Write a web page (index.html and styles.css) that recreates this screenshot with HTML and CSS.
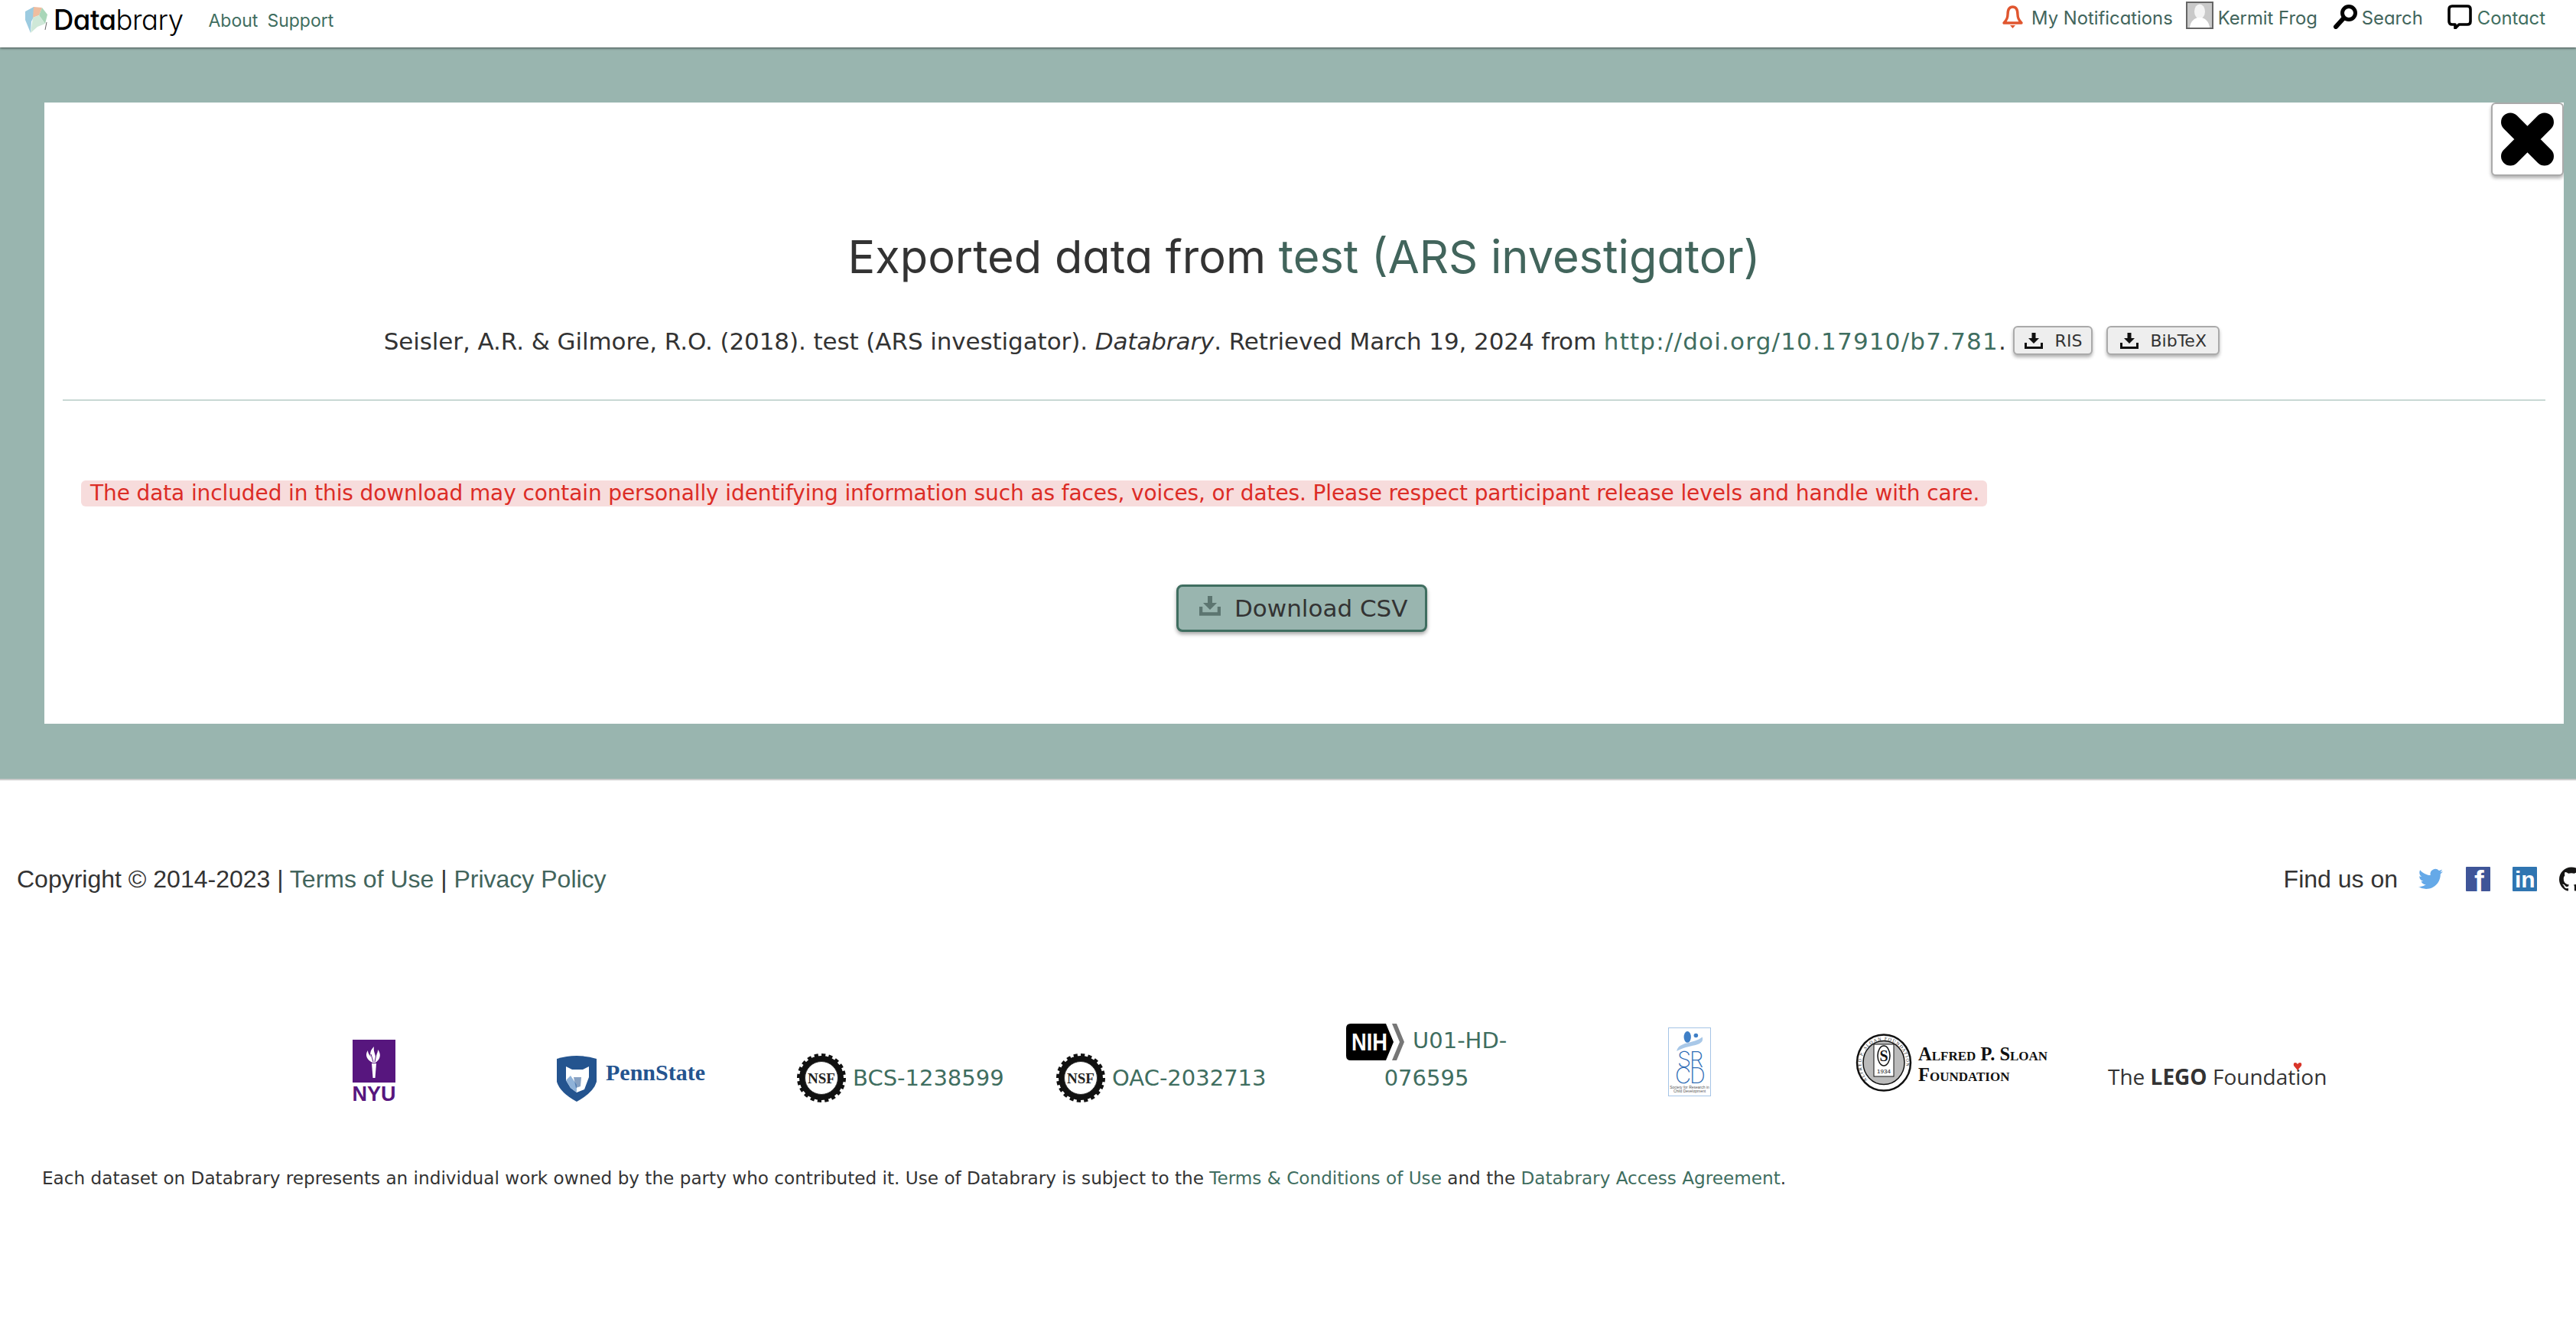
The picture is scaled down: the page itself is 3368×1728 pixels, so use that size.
FILE: index.html
```html
<!DOCTYPE html>
<html lang="en">
<head>
    <meta charset="UTF-8">
    <title>Databrary</title>
    <link rel="stylesheet" href="styles.css">
</head>
<body>

    <nav class="topbar">
        <div class="topbar-left">
            <a class="brand" href="#">
                <svg class="brand-leaf" viewBox="0 0 32 36">
                    <path d="M2 7 L13 1 L18 6 L10 20 L9 35 L2 18 Z" fill="#9ccbe0"/>
                    <path d="M13 1 L24 2 L20 12 L12 15 Z" fill="#efbd9f"/>
                    <path d="M24 2 L31 11 L28 23 L20 12 Z" fill="#a9d6b8"/>
                    <path d="M12 15 L20 12 L28 23 L18 27 L9 35 Z" fill="#cfe8d8"/>
                    <path d="M30 21 L28 31" stroke="#666" stroke-width="1" fill="none"/>
                </svg>
                <span class="brand-name"><b>Data</b>brary</span>
            </a>
            <a class="nav-link about" href="#">About</a>
            <a class="nav-link" href="#">Support</a>
        </div>
        <div class="topbar-right">
            <a class="nav-item notif" href="#">
                <svg class="nav-icon" viewBox="0 0 29 32">
                    <path d="M14.5 3 C9 3 8 8 8 13 C8 18 6 21 3 24 L26 24 C23 21 21 18 21 13 C21 8 20 3 14.5 3 Z" fill="none" stroke="#e0562f" stroke-width="3.4" stroke-linejoin="round"/>
                    <path d="M11 27 L18 27 L14.5 31 Z" fill="#e0562f"/>
                </svg>
                My Notifications
            </a>
            <a class="nav-item user" href="#">
                <svg class="avatar" viewBox="0 0 36 36">
                    <rect x="1" y="1" width="34" height="34" fill="#c9c9c9" stroke="#666" stroke-width="2"/>
                    <ellipse cx="18" cy="13" rx="7" ry="9.5" fill="#f4f4f4"/>
                    <path d="M5 34 C6 25 11 23 15 21 L21 21 C25 23 30 25 31 34 Z" fill="#fff"/>
                </svg>
                Kermit Frog
            </a>
            <a class="nav-item search" href="#">
                <svg class="nav-icon" viewBox="0 0 33 32">
                    <circle cx="21" cy="11" r="8.5" fill="none" stroke="#000" stroke-width="5"/>
                    <path d="M14 18 L4 29" stroke="#000" stroke-width="6" stroke-linecap="round"/>
                </svg>
                Search
            </a>
            <a class="nav-item contact" href="#">
                <svg class="nav-icon" viewBox="0 0 32 32">
                    <path d="M6 2 H26 Q30 2 30 6 V22 Q30 26 26 26 H15 L10 31 V26 H6 Q2 26 2 22 V6 Q2 2 6 2 Z" fill="none" stroke="#000" stroke-width="3.6" stroke-linejoin="round"/>
                </svg>
                Contact
            </a>
        </div>
    </nav>

    <main class="band">
        <section class="panel">
            <button class="close-btn">
                <svg viewBox="0 0 70 70">
                    <path d="M13 13 L57 57 M57 13 L13 57" stroke="#000" stroke-width="24" stroke-linecap="round"/>
                </svg>
            </button>

            <h1>Exported data from <a href="#">test (ARS investigator)</a></h1>

            <p class="citation">
                Seisler, A.R. &amp; Gilmore, R.O. (2018). test (ARS investigator). <em>Databrary</em>. Retrieved March 19, 2024 from <a href="#">http://doi.org/10.17910/b7.781</a>.
                <button class="cite-btn ris">
                    <svg class="dl-icon" viewBox="0 0 24 24"><path d="M9.5 2 H14.5 V9 H19 L12 16 L5 9 H9.5 Z" fill="#111"/><path d="M1.5 15 V21.500 H22.500 V15" fill="none" stroke="#111" stroke-width="3"/></svg>
                    RIS
                </button>
                <button class="cite-btn bibtex">
                    <svg class="dl-icon" viewBox="0 0 24 24"><path d="M9.5 2 H14.5 V9 H19 L12 16 L5 9 H9.5 Z" fill="#111"/><path d="M1.5 15 V21.500 H22.500 V15" fill="none" stroke="#111" stroke-width="3"/></svg>
                    BibTeX
                </button>
            </p>

            <hr class="rule">

            <p class="warning-row"><span class="warning">The data included in this download may contain personally identifying information such as faces, voices, or dates. Please respect participant release levels and handle with care.</span></p>

            <div class="download-row">
                <button class="download-btn">
                    <svg class="dl-big" viewBox="0 0 28 26"><path d="M11 0 H17 V9 H23 L14 18 L5 9 H11 Z" fill="#5c7570"/><path d="M2 14 V23.500 H26 V14" fill="none" stroke="#5c7570" stroke-width="4.500"/></svg>
                    <span>Download CSV</span>
                </button>
            </div>
        </section>
    </main>

    <footer class="footer">
        <div class="legal-row">
            <div class="copyright">Copyright © 2014-2023 | <a href="#">Terms of Use</a> | <a href="#">Privacy Policy</a></div>
            <div class="social">
                <span class="find-us">Find us on</span>
                <svg class="social-icon twitter" viewBox="0 0 24 24"><path fill="#65a9e8" d="M23.953 4.57a10 10 0 01-2.825.775 4.958 4.958 0 002.163-2.723c-.951.555-2.005.959-3.127 1.184a4.92 4.92 0 00-8.384 4.482C7.69 8.095 4.067 6.13 1.64 3.162a4.822 4.822 0 00-.666 2.475c0 1.71.87 3.213 2.188 4.096a4.904 4.904 0 01-2.228-.616v.06a4.923 4.923 0 003.946 4.827 4.996 4.996 0 01-2.212.085 4.936 4.936 0 004.604 3.417 9.867 9.867 0 01-6.102 2.105c-.39 0-.779-.023-1.17-.067a13.995 13.995 0 007.557 2.209c9.053 0 13.998-7.496 13.998-13.985 0-.21 0-.42-.015-.63A9.935 9.935 0 0024 4.59z"/></svg>
                <svg class="social-icon" viewBox="0 0 32 32"><rect width="32" height="32" rx="1" fill="#3f5598"/><text x="11" y="32" class="fb-f">f</text></svg>
                <svg class="social-icon" viewBox="0 0 32 32"><rect width="32" height="32" rx="1" fill="#2f75b1"/><text x="3" y="27" class="li-in">in</text></svg>
                <svg class="social-icon github" viewBox="0 0 24 24"><path fill="#161514" d="M12 .297c-6.63 0-12 5.373-12 12 0 5.303 3.438 9.8 8.205 11.385.6.113.82-.258.82-.577 0-.285-.01-1.04-.015-2.04-3.338.724-4.042-1.61-4.042-1.61C4.422 18.07 3.633 17.7 3.633 17.7c-1.087-.744.084-.729.084-.729 1.205.084 1.838 1.236 1.838 1.236 1.07 1.835 2.809 1.305 3.495.998.108-.776.417-1.305.76-1.605-2.665-.3-5.466-1.332-5.466-5.93 0-1.31.465-2.38 1.235-3.22-.135-.303-.54-1.523.105-3.176 0 0 1.005-.322 3.3 1.23.96-.267 1.98-.399 3-.405 1.02.006 2.04.138 3 .405 2.28-1.552 3.285-1.23 3.285-1.23.645 1.653.24 2.873.12 3.176.765.84 1.23 1.91 1.23 3.22 0 4.61-2.805 5.625-5.475 5.92.42.36.81 1.096.81 2.22 0 1.606-.015 2.896-.03 3.286 0 .315.21.69.825.57C20.565 22.092 24 17.592 24 12.297c0-6.627-5.373-12-12-12"/></svg>
            </div>
        </div>

        <div class="funders">
            <div class="funder nyu">
                <svg viewBox="0 0 56 56" class="nyu-box">
                    <rect width="56" height="56" fill="#57167e"/>
                    <path d="M26 30 C20 27 15 21 20 14 C20 19 23 20 24 23 C22 17 24 13 28 9 C27 14 29 17 30 22 C31 19 33 18 33 13 C38 19 36 26 30 30 Z" fill="#fff"/>
                    <path d="M24 19 L27 29 M31 19 L29 29" stroke="#57167e" stroke-width="1"/>
                    <path d="M25 31 H31 L29.500 50 H26.500 Z" fill="#fff"/>
                </svg>
                <span class="nyu-name">NYU</span>
            </div>
            <div class="funder penn">
                <svg class="penn-shield" viewBox="0 0 56 62">
                    <path d="M2 6 Q28 -2 54 6 V36 Q50 50 28 62 Q6 50 2 36 Z" fill="#24548f"/>
                    <path d="M14 16 L22 20 H36 L44 16 L44 30 L38 46 L28 50 L20 44 L14 34 Z" fill="#fff"/>
                    <path d="M14 34 L20 44 L28 50 L28 40 L20 28 Z" fill="#8fb2d8"/>
                    <path d="M24 30 L34 30 L33 42 L27 44 Z" fill="#24548f" opacity=".55"/>
                </svg>
                <span class="penn-name">PennState</span>
            </div>
            <div class="funder grant">
                <svg class="nsf-seal" viewBox="0 0 64 64">
                    <circle cx="32" cy="32" r="25" fill="none" stroke="#111" stroke-width="8"/>
                    <circle cx="32" cy="32" r="29" fill="none" stroke="#111" stroke-width="6" stroke-dasharray="5 4.100"/>
                    <circle cx="32" cy="32" r="21.500" fill="#fff" stroke="#333" stroke-width="1"/>
                    <text x="32" y="39" class="nsf-text">NSF</text>
                </svg>
                <a href="#">BCS-1238599</a>
            </div>
            <div class="funder grant">
                <svg class="nsf-seal" viewBox="0 0 64 64">
                    <circle cx="32" cy="32" r="25" fill="none" stroke="#111" stroke-width="8"/>
                    <circle cx="32" cy="32" r="29" fill="none" stroke="#111" stroke-width="6" stroke-dasharray="5 4.100"/>
                    <circle cx="32" cy="32" r="21.500" fill="#fff" stroke="#333" stroke-width="1"/>
                    <text x="32" y="39" class="nsf-text">NSF</text>
                </svg>
                <a href="#">OAC-2032713</a>
            </div>
            <div class="nih">
                <svg class="nih-mark" viewBox="0 0 76 48">
                    <path d="M6 0 H52 L62 24 L52 48 H6 Q0 48 0 42 V6 Q0 0 6 0 Z" fill="#000"/>
                    <path d="M60 0 H66 L76 24 L66 48 H60 L70 24 Z" fill="#777"/>
                    <text x="7" y="35" class="nih-text" textLength="47" lengthAdjust="spacingAndGlyphs">NIH</text>
                </svg>
                <a href="#">U01-HD-076595</a>
            </div>
            <div class="funder srcd">
                <div class="srcd-box">
                    <svg class="srcd-swirl" viewBox="0 0 48 28">
                        <ellipse cx="21" cy="8" rx="5" ry="8" fill="#3f7fc6"/>
                        <circle cx="33" cy="6" r="3" fill="#3f7fc6"/>
                        <path d="M42 8 C46 22 22 18 6 28 C8 14 30 18 42 8 Z" fill="#a9c8e8"/>
                    </svg>
                    <span class="srcd-sr">SR</span>
                    <span class="srcd-cd">CD</span>
                    <span class="srcd-small">Society for Research in Child Development</span>
                </div>
            </div>
            <div class="funder sloan">
                <svg class="sloan-seal" viewBox="0 0 74 76">
                    <ellipse cx="37" cy="38" rx="35" ry="36.500" fill="#fff" stroke="#111" stroke-width="2.500"/>
                    <ellipse cx="37" cy="38" rx="27" ry="28.500" fill="#bbb" stroke="#111" stroke-width="1.500"/>
                    <path id="sloanRing" d="M20 65 A29.500 31 0 1 1 54 65" fill="none"/>
                    <text class="sloan-ring"><textPath href="#sloanRing" startOffset="6">ALFRED P. SLOAN FOUNDATION</textPath></text>
                    <rect x="24" y="14" width="26" height="42" fill="#fff" stroke="#111"/>
                    <ellipse cx="37" cy="29" rx="8" ry="13" fill="#fff" stroke="#111" stroke-width="1.500"/>
                    <text x="37" y="36" class="sloan-s">S</text>
                    <text x="37" y="52" class="sloan-year">1934</text>
                </svg>
                <div class="sloan-name">
                    <span>Alfred P. Sloan</span>
                    <span>Foundation</span>
                </div>
            </div>
            <div class="funder lego">
                <span>The <b>LEGO</b> Foundation<svg class="lego-heart" viewBox="0 0 12 10"><path d="M6 10 L1 4 Q0 0 3 0 Q5 0 6 2 Q7 0 9 0 Q12 0 11 4 Z" fill="#d9352a"/></svg></span>
            </div>
        </div>

        <p class="notice">Each dataset on Databrary represents an individual work owned by the party who contributed it. Use of Databrary is subject to the <a href="#">Terms &amp; Conditions of Use</a> and the <a href="#">Databrary Access Agreement</a>.</p>
    </footer>

</body>
</html>
```

FILE: styles.css
```css
html, body {
    margin: 0;
    overflow-x: hidden;
}
body {
    font-family: "DejaVu Sans", sans-serif;
    color: #333;
    background-color: #fff;
}
a {
    color: #3f6e60;
    text-decoration: none;
}
button {
    font-family: inherit;
    cursor: pointer;
}

/* Top bar */
.topbar {
    height: 62px;
    display: flex;
    justify-content: space-between;
    box-shadow: 0 1px 3px rgba(0,0,0,0.6);
    position: relative;
    font-family: Inter, sans-serif;
    font-feature-settings: "cv11";
}
.topbar-left {
    display: flex;
    align-items: flex-start;
    padding-left: 31px;
}
.brand {
    display: flex;
    color: #000;
    padding-top: 8px;
}
.brand-leaf {
    width: 32px;
    height: 36px;
}
.brand-name {
    font-size: 36.5px;
    line-height: 36px;
    margin-left: 7px;
    font-weight: 300;
    letter-spacing: -0.5px;
}
.brand-name b {
    font-weight: 500;
}
.nav-link {
    font-size: 23px;
    line-height: 54px;
}
.nav-link.about {
    margin-left: 33px;
    margin-right: 12px;
}
.topbar-right {
    display: flex;
    align-items: flex-start;
    padding-right: 40px;
    padding-top: 2px;
}
.nav-item {
    display: flex;
    font-size: 23.8px;
    line-height: 44px;
    color: #42655c;
}
.nav-icon {
    width: 29px;
    height: 32px;
    margin: 4px 10px 0 0;
}
.notif { margin-right: 17px; }
.user { margin-right: 20px; }
.search { margin-right: 32px; }
.search .nav-icon { width: 33px; margin-right: 5px; }
.contact { color: #3f6e60; }
.contact .nav-icon { width: 32px; margin-right: 7px; }
.avatar {
    width: 36px;
    height: 36px;
    margin-right: 6px;
}

/* Main area */
.band {
    background-color: #99b5af;
    padding: 72px 16px 72px 58px;
    border-bottom: 2px solid #ccc;
}
.panel {
    position: relative;
    height: 812px;
    background-color: #fff;
    overflow: hidden;
}
.close-btn {
    position: absolute;
    top: 0;
    right: 0;
    width: 95px;
    height: 96px;
    padding: 10px;
    background-color: #fff;
    border: 2px solid #aaa;
    border-radius: 6px;
    box-shadow: 0 3px 4px rgba(0,0,0,0.3);
}
.close-btn svg {
    display: block;
    width: 71px;
    height: 72px;
}
h1 {
    margin: 166px 0 0;
    font-family: Inter, sans-serif;
    font-feature-settings: "cv11";
    font-size: 59.5px;
    line-height: 70px;
    font-weight: 400;
    text-align: center;
    color: #333;
}
h1 a {
    color: #42655c;
}
.citation {
    margin: 52px 0 0;
    padding-right: 6px;
    font-size: 31px;
    line-height: 48px;
    letter-spacing: -0.1px;
    text-align: center;
}
.citation a {
    letter-spacing: 1.2px;
}
.cite-btn {
    display: inline-flex;
    align-items: center;
    justify-content: center;
    box-sizing: border-box;
    width: 104px;
    height: 38px;
    padding: 0;
    font-size: 22px;
    color: #333;
    background-color: #eee;
    border: 2px solid #aaa;
    border-radius: 6px;
    box-shadow: 0 3px 4px rgba(0,0,0,0.3);
}
.bibtex {
    width: 148px;
    margin-left: 8px;
}
.dl-icon {
    width: 24px;
    height: 24px;
    margin-right: 16px;
}
.rule {
    margin: 52px 24px 0;
    border: 0;
    border-top: 2px solid #c8d8d4;
}
.warning-row {
    margin: 104px 0 0 48px;
}
.warning {
    display: inline-block;
    font-size: 28px;
    line-height: 34px;
    letter-spacing: -0.11px;
    padding: 0 10px 0 12px;
    color: #dc2c26;
    background-color: #f7dcdc;
    border-radius: 6px;
}
.download-row {
    margin-top: 102px;
    text-align: center;
    padding-right: 6px;
}
.download-btn {
    display: inline-flex;
    align-items: center;
    width: 328px;
    height: 62px;
    padding: 0 0 0 27px;
    font-size: 31px;
    color: #333;
    background-color: #99b5af;
    border: 3px solid #3f6e60;
    border-radius: 8px;
    box-shadow: 0 3px 5px rgba(0,0,0,0.35);
}
.dl-big {
    width: 28px;
    height: 26px;
    margin: -6px 18px 0 0;
}

/* Footer */
.footer {
    padding-top: 105px;
}
.legal-row {
    display: flex;
    justify-content: space-between;
    align-items: center;
    padding-left: 22px;
    font-family: "Liberation Sans", sans-serif;
    font-size: 32px;
    line-height: 48px;
}
.copyright a {
    color: #42655c;
}
.social {
    display: flex;
    align-items: center;
    margin-right: -10px;
}
.find-us {
    margin-right: 25px;
}
.social-icon {
    width: 32px;
    height: 32px;
    margin-right: 29px;
}
.twitter {
    width: 36px;
    margin-right: 28px;
}
.github {
    margin-right: 0;
}
.fb-f {
    font: bold 38px "Liberation Sans", sans-serif;
    fill: #fff;
}
.li-in {
    font: bold 30px "Liberation Sans", sans-serif;
    fill: #fff;
}

.funders {
    display: grid;
    grid-template-columns: 265px 316px 339px 375px 425px 245px 330px 1fr;
    align-items: end;
    margin-top: 164px;
    padding-left: 461px;
    height: 104px;
    font-size: 29px;
    line-height: 47px;
}
.funder {
    display: flex;
    align-items: center;
}
.funder a {
    color: #3f6e60;
}
.nyu {
    flex-direction: column;
    width: 56px;
}
.nyu-box {
    width: 56px;
    height: 56px;
}
.nyu-name {
    font-family: "Liberation Sans", sans-serif;
    font-size: 27px;
    line-height: 30px;
    height: 26px;
    font-weight: bold;
    color: #57167e;
}
.penn {
    align-items: flex-start;
    padding-bottom: 1px;
}
.penn-shield {
    width: 56px;
    height: 62px;
}
.penn-name {
    font-family: "Liberation Serif", serif;
    font-size: 30px;
    line-height: 32px;
    font-weight: bold;
    color: #24548f;
    margin: 8px 0 0 10px;
}
.grant {
    gap: 9px;
}
.nsf-seal {
    width: 64px;
    height: 64px;
    flex-shrink: 0;
}
.nsf-text {
    font: bold 19px "Liberation Serif", serif;
    text-anchor: middle;
    fill: #222;
}
.nih {
    align-self: start;
    width: 218px;
    text-align: center;
}
.nih-mark {
    width: 76px;
    height: 48px;
    margin-right: 2px;
    vertical-align: -16px;
}
.nih-text {
    font: bold 32px "Liberation Sans", sans-serif;
    fill: #fff;
}
.srcd {
    padding-bottom: 8px;
}
.srcd-box {
    box-sizing: border-box;
    width: 56px;
    height: 90px;
    border: 1px solid #a5c4e6;
    display: flex;
    flex-direction: column;
    align-items: center;
    color: #2f6db5;
    padding-top: 4px;
}
.srcd-swirl {
    width: 48px;
    height: 26px;
    flex-shrink: 0;
}
.srcd-sr, .srcd-cd {
    font-family: Inter, sans-serif;
    font-size: 29px;
    line-height: 21px;
    font-weight: 200;
    letter-spacing: -2px;
}
.srcd-small {
    font-family: "Liberation Sans", sans-serif;
    font-size: 5px;
    line-height: 5px;
    width: 54px;
    text-align: center;
    color: #555;
    margin-top: 3px;
}
.sloan {
    align-items: flex-start;
    padding-bottom: 14px;
    gap: 8px;
}
.sloan-seal {
    width: 74px;
    height: 76px;
    flex-shrink: 0;
}
.sloan-ring {
    font: 6px "Liberation Serif", serif;
    letter-spacing: 1.2px;
    fill: #111;
}
.sloan-s {
    font: bold 20px "Liberation Serif", serif;
    text-anchor: middle;
    fill: #111;
}
.sloan-year {
    font: 8px "Liberation Sans", sans-serif;
    text-anchor: middle;
    fill: #111;
}
.sloan-name {
    font-family: "Liberation Serif", serif;
    font-variant: small-caps;
    font-weight: bold;
    font-size: 24.5px;
    line-height: 27px;
    color: #111;
    margin-top: 13px;
    white-space: nowrap;
}
.sloan-name span {
    display: block;
}
.lego {
    font-family: "Open Sans", sans-serif;
    font-size: 28px;
    line-height: 36px;
    color: #333;
    padding-bottom: 16px;
    white-space: nowrap;
}
.lego > span {
    position: relative;
}
.lego-heart {
    position: absolute;
    right: 32px;
    top: 0;
    width: 12px;
    height: 10px;
}
.notice {
    margin: 81px 0 0 55px;
    font-size: 23.15px;
    line-height: 36px;
}
```
